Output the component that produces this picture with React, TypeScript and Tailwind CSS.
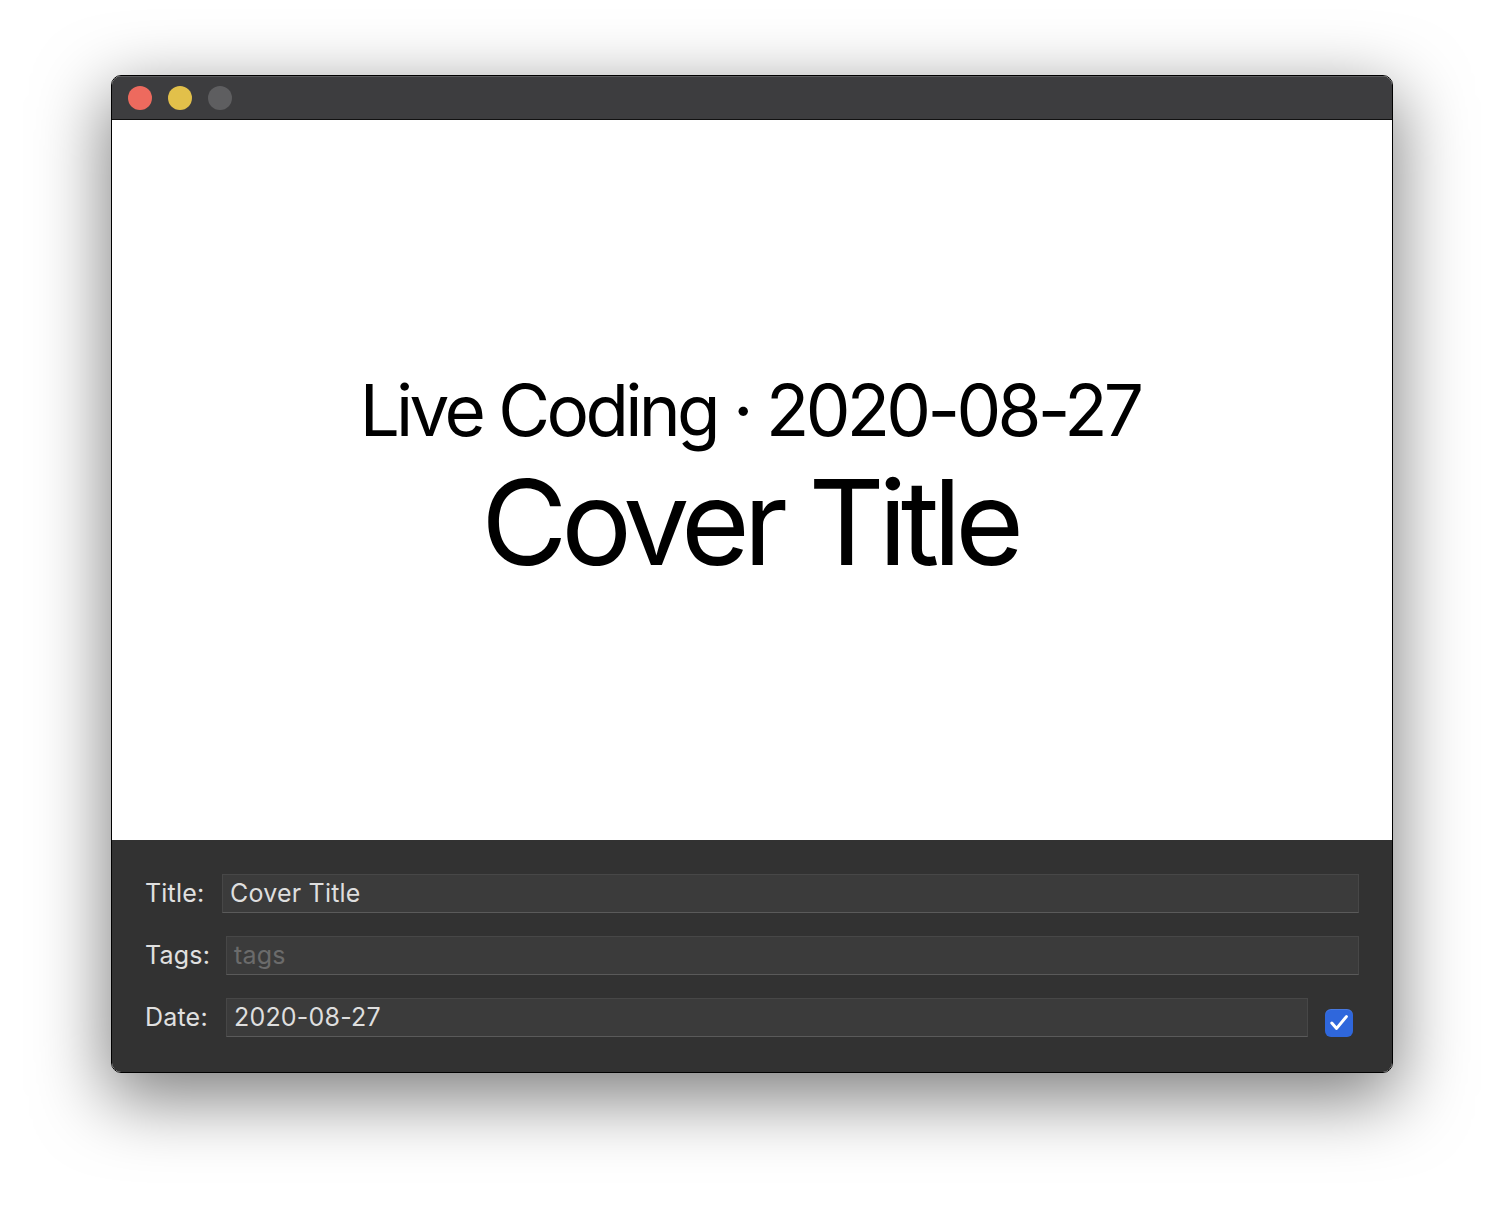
import React from "react";

function Field({ value, placeholder, className = "" }: { value?: string; placeholder?: string; className?: string }) {
  return (
    <div
      className={
        "h-[39px] flex items-center px-[7px] bg-[#3b3b3b] border border-[#474747] border-b-[#5a5a5a] text-[25px] tracking-[0.2px] " +
        className
      }
    >
      {value ? (
        <span className="text-[#dedede]">{value}</span>
      ) : (
        <span className="text-[#6b6b6b]">{placeholder}</span>
      )}
    </div>
  );
}

export default function App() {
  return (
    <div className="min-h-[1220px] w-[1504px] bg-white pt-[75px] pl-[111px]" style={{ fontFamily: "Inter, 'Liberation Sans', sans-serif" }}>
      <div className="w-[1282px] h-[998px] rounded-[10px] border border-black overflow-hidden flex flex-col shadow-[0_22px_70px_4px_rgba(0,0,0,0.5)]">
        <div className="h-[44px] bg-[#3d3d3f] border-b border-[#111] shadow-[inset_0_1px_0_#5c5c5e] flex items-center pl-[16px] gap-[16px] shrink-0">
          <div className="w-[24px] h-[24px] rounded-full bg-[#ed6a5e]" />
          <div className="w-[24px] h-[24px] rounded-full bg-[#e2c04a]" />
          <div className="w-[24px] h-[24px] rounded-full bg-[#5e5e60]" />
        </div>
        <div className="h-[720px] bg-white flex flex-col items-center pt-[250px] shrink-0 text-black">
          <div className="text-[71px] leading-[80px] tracking-[-3.7px] whitespace-nowrap pr-[4px]">Live Coding · 2020-08-27</div>
          <div className="text-[118px] leading-[144px] tracking-[-6.3px] whitespace-nowrap pr-[5px]">Cover Title</div>
        </div>
        <div className="flex-1 bg-[#323232] px-[33px] pt-[34px] flex flex-col gap-[23px]">
          <div className="flex items-center">
            <span className="text-[25px] tracking-[0.2px] text-[#e0e0e0] w-[77px] shrink-0">Title:</span>
            <Field value="Cover Title" className="flex-1" />
          </div>
          <div className="flex items-center">
            <span className="text-[25px] tracking-[0.2px] text-[#e0e0e0] w-[81px] shrink-0">Tags:</span>
            <Field placeholder="tags" className="flex-1" />
          </div>
          <div className="flex items-center">
            <span className="text-[25px] tracking-[0.2px] text-[#e0e0e0] w-[81px] shrink-0">Date:</span>
            <Field value="2020-08-27" className="flex-1" />
            <div className="ml-[17px] mr-[6px] w-[28px] h-[28px] rounded-[6px] bg-[#2f67dc] flex items-center justify-center mt-[10px] shadow-[inset_0_1px_0_rgba(255,255,255,0.12)]">
              <svg width="28" height="28" viewBox="0 0 28 28" fill="none">
                <path d="M6.8 14 L11.6 19.4 L21.4 7.6" stroke="white" strokeWidth="3" strokeLinecap="round" strokeLinejoin="round" />
              </svg>
            </div>
          </div>
        </div>
      </div>
    </div>
  );
}
